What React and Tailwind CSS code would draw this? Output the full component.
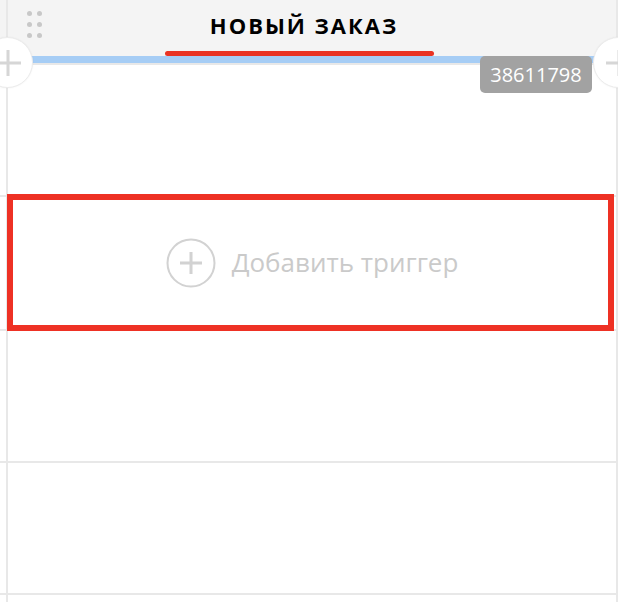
import React from "react";

function Row({ h, children, bg = "bg-white", border = true }) {
  return (
    <div className={`flex w-full ${h} ${bg} ${border ? "border-b-2 border-[#e8e8e8]" : ""}`}>
      <div className="w-[6px] shrink-0" />
      <div className="w-[2px] shrink-0 bg-[#e8e8e8]" />
      <div className="flex-1 relative">{children}</div>
      <div className="w-[2px] shrink-0 bg-[#e8e8e8]" />
    </div>
  );
}

function PlusCircle({ className }) {
  return (
    <div className={`absolute w-[51px] h-[51px] rounded-full bg-white border border-[#ececec] shadow-[0_0_2px_rgba(0,0,0,0.06)] flex items-center justify-center ${className}`}>
      <svg width="26" height="26" viewBox="0 0 26 26">
        <path d="M13 0V26M0 13H26" stroke="#d6d6d6" strokeWidth="3" />
      </svg>
    </div>
  );
}

export default function App() {
  return (
    <div
      className="relative w-[618px] h-[602px] overflow-hidden bg-white"
      style={{ fontFamily: '"Open Sans", "Noto Sans", sans-serif' }}
    >
      <div className="flex flex-col">
        <Row h="h-[56px]" bg="bg-[#f4f4f4]" border={false}>
          <div className="flex h-full items-center">
            <div className="grid grid-cols-2 gap-x-[5px] gap-y-[6px] ml-[19px] mb-[8px]">
              {[0, 1, 2, 3, 4, 5].map((i) => (
                <span key={i} className="block w-[5px] h-[5px] rounded-full bg-[#c8c8c8]" />
              ))}
            </div>
            <div className="flex-1 flex justify-center pr-[50px] pb-[6px]">
              <span className="text-[22px] font-bold tracking-[0.09em] text-black leading-none">
                НОВЫЙ ЗАКАЗ
              </span>
            </div>
          </div>
        </Row>
        <div className="h-[7px] bg-[#a6cdf5]" />
        <div className="h-[2px] bg-[#e8e8e8]" />
        <Row h="h-[132px]" />
        <Row h="h-[134px]">
          <div className="flex h-full items-center justify-center gap-[16px]">
            <svg width="50" height="50" viewBox="0 0 50 50">
              <circle cx="25" cy="25" r="23.5" fill="none" stroke="#d2d2d2" strokeWidth="2" />
              <path d="M25 14V36M14 25H36" stroke="#d2d2d2" strokeWidth="3" />
            </svg>
            <span className="text-[26px] text-[#cacaca] leading-none pb-[2px]">Добавить триггер</span>
          </div>
        </Row>
        <Row h="h-[132px]" />
        <Row h="h-[132px]" />
        <Row h="h-[20px]" border={false} />
      </div>

      {/* overlays */}
      <div className="absolute left-[165px] top-[51px] w-[269px] h-[5px] rounded-full bg-[#ea3323]" />
      <PlusCircle className="left-[-18px] top-[37px]" />
      <PlusCircle className="left-[593px] top-[37px]" />
      <div className="absolute left-[480px] top-[56px] w-[112px] h-[37px] rounded-[5px] bg-[#a2a2a2] flex items-center justify-center">
        <span className="text-[20px] text-white leading-none">38611798</span>
      </div>
      <div className="absolute left-[7px] top-[194px] w-[607px] h-[137px] border-[6px] border-[#ee3124]" />
    </div>
  );
}
